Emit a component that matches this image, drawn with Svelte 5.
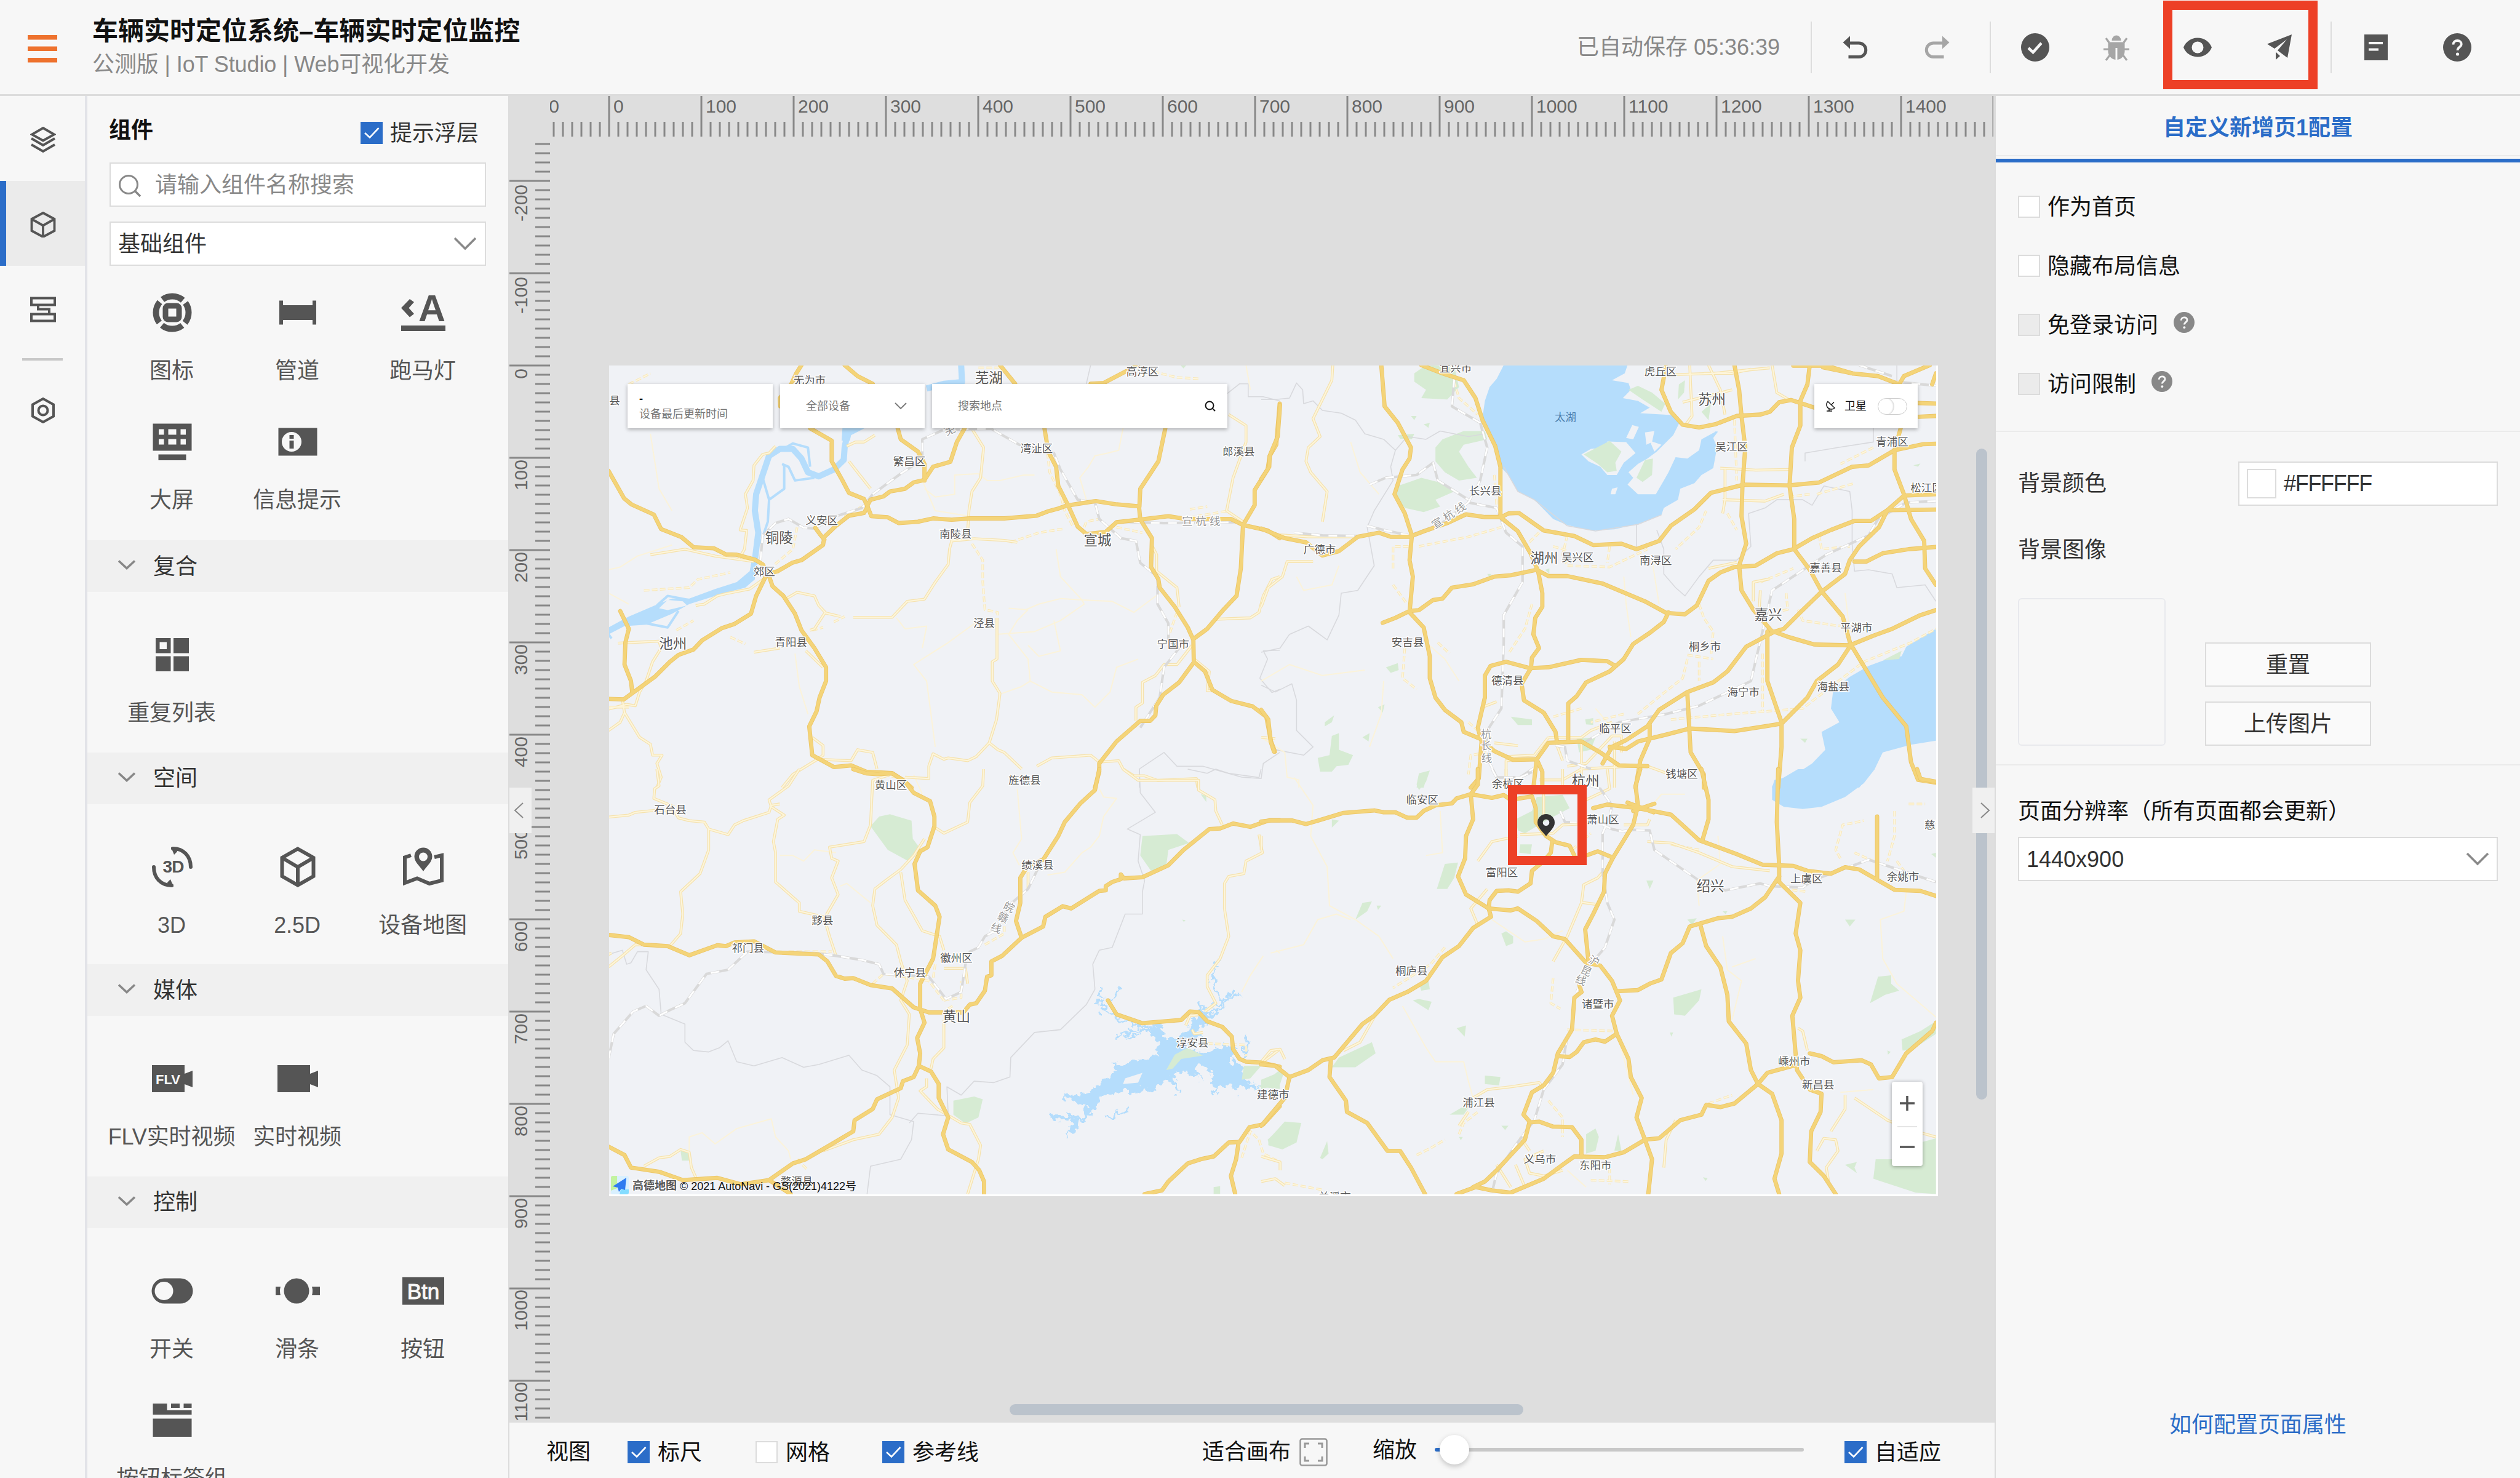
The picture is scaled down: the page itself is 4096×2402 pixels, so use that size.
<script>
  const groups = [
    { title: '', items: [['icon', '图标'], ['pipe', '管道'], ['marquee', '跑马灯'], ['screen', '大屏'], ['info', '信息提示']] },
    { title: '复合', items: [['repeat', '重复列表']] },
    { title: '空间', items: [['threeD', '3D'], ['cube', '2.5D'], ['geo', '设备地图']] },
    { title: '媒体', items: [['flv', 'FLV实时视频'], ['video', '实时视频']] },
    { title: '控制', items: [['toggle', '开关'], ['slider', '滑条'], ['btn', '按钮'], ['tabs', '按钮标签组']] }
  ];

  // Ruler ticks: one unit step is 10 canvas points, drawn 15px apart.
  const hTicks = Array.from({ length: 157 }, (_, i) => i - 6).map((k) => ({ pos: 96 + k * 15, major: k % 10 === 0, value: k * 10 }));
  const vTicks = Array.from({ length: 139 }, (_, i) => i - 24).map((k) => ({ pos: 372 + k * 15, major: k % 10 === 0, value: k * 10 }));
  const labelGap = (v) => (v < 0 ? 6 : 6 - String(v).length);

  // The map is split in four tiles, each with its own local coordinates.
  const tiles = [
    {
      t: 'translate(980 580) scale(.70153 .44643)', ox: 980, oy: 580, sx: 0.70153, sy: 0.44643,
      water: ['345,740 355,740 352,810 330,840 280,860 200,900 160,935 100,975 50,980 13,1010 13,985 60,945 120,905 160,880 200,880 260,845 310,820 340,780', '555,258 608,258 575,285 572,305 553,305'],
      land: ['130,915 150,885 185,890 195,905 150,922'],
      river: ['830,30 832,92 790,98 750,115', '565,290 560,330 558,375 535,410 500,435 475,420 460,370 440,335 410,335 385,360 370,430 355,500 352,560 360,640 352,740 347,790'],
      stream: ['415,390 430,400 445,450 490,440', '420,395 420,480 385,520 382,600 365,680', '370,440 385,520', '125,905 150,870 200,885', '100,970 150,985 175,925', '390,360 440,315 475,330 480,400', '13,1010 20,1025'],
      green: ['1338,30 1352,30 1345,42'],
      major: ['460,30 448,60 436,100 410,150 411,180', '13,415 49,515 66,537 118,574 135,627 182,656 210,693 257,697 285,719 310,720 352,738 370,755 383,790', '480,260 530,305 530,380 555,450 570,495 605,517 613,545 622,580 660,584 685,605 730,600 765,588 808,593 850,588 930,588 1005,578 1030,563 1055,552 1075,541 1142,525 1190,537 1242,544 1245,592 1272,660 1270,765 1287,810 1290,840 1325,910 1355,985 1368,1030 1369,1110 1395,1145 1412,1212 1455,1252 1505,1272 1537,1310 1548,1400 1557,1437', '613,540 620,520 650,508 665,490 700,480 720,457 745,448 765,400 805,382 820,310 838,260', '683,260 690,300 730,345 745,390 745,450', '560,30 590,70 625,98', '920,30 955,98', '1130,98 1160,95 1215,50 1240,30', '1023,260 1032,345 1050,400 1055,470 1078,541 1100,618 1120,645 1165,637 1190,602 1245,592 1310,580 1350,590 1455,590 1483,612 1540,632 1568,660', '1303,260 1287,380 1245,480 1243,545', '1568,170 1560,320 1545,360 1540,410 1510,485 1510,540 1483,612 1478,770 1468,870 1435,925 1400,990 1370,1025', '613,545 605,568 570,578 540,615 513,655 510,685 460,740 438,750 405,780 383,790 393,835 418,870 445,935 460,995 490,1060 517,1130 517,1180 502,1240 495,1290 478,1345 485,1450 535,1493 575,1487 610,1510 670,1515 695,1540 715,1568', '492,622 505,650 513,665', '380,790 355,870 343,935 305,972 275,988 230,1032 210,1065 175,1085 155,1110 120,1165 70,1222 48,1247 13,1245', '40,925 60,990 52,1040 50,1120 65,1180 68,1222', '1369,1112 1335,1185 1298,1230 1282,1270 1280,1305 1268,1325 1245,1325 1190,1400 1150,1480 1150,1510 1140,1568'],
      minor: ['400,325 385,350 370,355 350,395 348,450 330,500 335,550 318,630 333,632 328,700 315,735', '385,795 340,845 285,862 265,870 235,900 215,905', '425,880 450,857 490,870 500,905 515,930 490,990 480,995', '515,932 550,945', '580,948 670,948 705,890 745,882 770,820 800,755 803,700 808,670 860,662 930,668 960,675', '913,950 913,1100 902,1110 902,1180 920,1225 912,1320 895,1405 915,1430 930,1440 970,1500', '895,1405 865,1455 845,1470 800,1460 790,1465 765,1445 755,1490 755,1535 700,1530', '415,1568 440,1520 497,1465 510,1450 510,1415 485,1385', '497,1465 575,1470 590,1430 625,1440 635,1500', '1005,1490 1040,1460 1130,1450 1150,1475 1195,1470 1205,1500 1230,1525 1255,1525 1285,1542 1375,1535 1378,1568', '1365,1050 1330,1120 1300,1120 1280,1160 1250,1185 1250,1260 1235,1275 1235,1325', '1370,1100 1405,1145 1400,1215 1420,1215', '13,1360 40,1330 50,1295 85,1385 110,1410 115,1450 137,1450 125,1480 135,1530 125,1568', '13,1282 55,1265 75,1270 85,1220 100,1180 115,1110 135,1060 130,1035 35,1042', '50,1295 45,1247', '1270,680 1283,720 1283,780 1330,840 1335,910', '1568,800 1550,810 1530,870 1520,930 1500,950 1420,955', '1450,210 1490,250 1490,310 1460,440 1445,560 1483,600', '855,262 882,330 875,440 855,490 848,560 845,640', '565,325 585,310 605,310 630,285', '570,380 620,480', '110,720 190,700 260,725 350,745', '470,1070 510,1130', '350,1075 410,1060', '13,1275 60,1275'],
      dash: ['95,850 200,840 220,810 295,785', '945,675 1010,640 1070,625', '855,680 880,740 880,820 885,920 915,930 913,960', '450,620 440,700 395,760', '1030,350 1035,420 1060,500 1070,560 1090,620', '60,100 110,60', '1115,620 1120,600 1150,590', '295,1020 330,1045', '170,995 210,960', '1330,930 1310,1020', '485,995 510,985', '535,965 560,945', '1360,555 1400,545', '870,40 925,40', '560,580 600,545', '1340,590 1450,560', '1240,40 1330,75 1385,80', '1190,620 1250,640'],
      faint: ['1205,260 1195,340 1170,350 1140,360 1125,400 1105,440 1120,520', '13,775 40,765 80,725 110,710 160,685', '745,480 770,510 815,500 815,430 870,425 890,450 920,450 975,430 1000,430', '940,915 980,920 1010,900 1060,880 1110,885 1115,900 1060,960 1000,1000 910,1010', '985,920 960,960 940,1010 985,1100 990,1180 1040,1220 1110,1230 1140,1275 1175,1220 1190,1130 1240,1100', '770,1420 760,1300 750,1180 720,1120 760,1080 800,1040 870,960', '1050,700 1060,800 1110,885 1180,890 1230,930 1290,860', '445,1080 455,1200 475,1300', '110,280 130,480 160,560', '1045,960 1060,1070 1010,1090 985,1050', '925,1225 970,1200 990,1180', '13,860 60,900', '680,950 700,990 750,980 740,1060', '1490,30 1500,120', '740,450 770,560 850,580'],
      rail: ['625,500 690,425 740,375 740,300 790,265 900,262 965,320 1045,350 1060,410 1100,520 1140,530 1150,590 1200,660 1235,670 1245,750 1285,800 1285,900 1310,970 1310,1040 1335,1060 1300,1130 1290,1240 1245,1350', '1190,600 1300,605 1470,602', '365,740 370,650 400,605 430,590 465,622 490,625 540,580 600,550 625,500'],
      bound: ['1120,98 1130,30', '1445,135 1475,98 1495,98 1495,145 1530,145 1568,160', '1568,1068 1530,1070 1540,1100 1522,1170 1550,1222 1568,1210', '1243,1568 1243,1500 1300,1440 1330,1490 1390,1490 1480,1530 1525,1535 1530,1480 1568,1440'],
      labels: [['无为市', 479, 84], ['芜湖', 894, 75, 1], ['高淳区', 1250, 53], ['县', 27, 159], ['湾沚区', 1005, 333], ['郎溪县', 1473, 343], ['繁昌区', 710, 380], ['义安区', 507, 595], ['铜陵', 408, 657, 1], ['南陵县', 817, 645], ['宣城', 1146, 667, 1], ['宣 杭 线', 1386, 597, 2], ['芜', 803, 266, 2, -25], ['郊区', 374, 780], ['池州', 162, 1042, 1], ['青阳县', 436, 1039], ['泾县', 883, 968], ['宁国市', 1321, 1045], ['旌德县', 977, 1539]]
    },
    {
      t: 'translate(2050 580) scale(.76531 .44643)', ox: 2050, oy: 580, sx: 0.76531, sy: 0.44643,
      water: ['515,30 778,30 772,60 745,85 780,95 785,120 768,150 800,160 825,185 805,205 855,210 880,213 888,240 920,262 970,272 960,295 968,330 960,405 935,430 920,460 890,480 885,520 855,550 850,575 800,608 750,628 700,632 650,612 620,590 600,555 580,520 545,490 525,430 508,400 495,320 480,260 470,220 475,160 485,110 500,80', '1433,990 1370,1055 1360,1090 1330,1100 1290,1125 1250,1165 1215,1210 1210,1280 1228,1330 1190,1365 1198,1430 1170,1480 1130,1525 1090,1540 1085,1568 1270,1568 1303,1500 1320,1440 1380,1412 1433,1397'],
      land: ['888,240 965,272 935,300 930,340 905,370 880,365 865,420 855,450 838,500 800,500 778,465 790,440 780,420 800,390 820,370 840,345 875,285', '680,355 700,335 735,330 735,308 775,310 795,350 770,385 755,430 735,430 720,400 695,380', '788,248 802,255 790,300 775,295', '815,275 835,270 830,310 818,320', '745,480 757,475 752,500 742,500', '825,305 850,320 835,345'],
      green: ['325,60 350,30 410,35 420,110 395,155 340,150 350,120 325,90', '370,330 385,300 430,270 475,270 480,300 430,320 420,345 440,400 458,440 420,450 390,420 370,380', '290,470 340,440 385,460 410,490 370,520 380,545 345,565 305,550 285,510', '685,355 740,306 765,345 752,385 755,415 735,420 715,390', '797,440 815,375 832,370 830,430 810,455', '780,120 800,105 830,130 858,170 850,200 810,155', '887,100 900,85 898,130 885,155', '935,200 955,170 950,230', '265,1130 290,1115 292,1140 275,1150', '135,1330 155,1305 150,1330 135,1345', '120,1460 145,1450 150,1380 165,1370 165,1430 195,1450 185,1485 160,1490 150,1510 125,1510', '335,1520 355,1510 345,1568 330,1568', '530,1310 575,1320 575,1340 545,1340', '215,1385 230,1370 228,1400', '670,1390 710,1385 700,1430 675,1440', '1320,1105 1360,1070 1355,1100', '290,285 325,280 320,300 295,298', '318,215 330,215 325,230', '1145,1390 1160,1390 1155,1405', '480,790 488,790 486,805', '603,775 612,770 612,790', '688,1320 705,1315 705,1340 690,1338', '1385,395 1400,388 1395,400', '345,245 358,240 355,258', '248,1275 262,1265 258,1295'],
      major: ['255,30 262,180 290,240 318,330 315,370 300,410 283,500 305,570 320,650 315,740 322,800 315,930 345,985 358,1090 358,1170 370,1240 390,1285 425,1330 430,1365 465,1390 495,1435 535,1467 585,1465', '40,175 35,290 18,360 17,400 0,445', '0,625 50,660 95,675 130,723 165,707 205,655 250,640 275,655 315,655 345,635 395,605 435,573 475,583 510,583', '340,30 385,60 430,85 455,150 470,230 497,325 508,400 508,583 545,635 572,715 588,780', '510,583 525,570 547,568 600,632 665,652 705,685 765,680 797,700 845,670 870,615 920,555 955,495 1025,465 1120,468 1185,457 1255,400 1290,395 1345,340 1405,318 1433,316', '258,968 285,950 315,925 335,922 365,885 385,880 405,840 450,828 495,800 530,795 585,775 610,798 650,798 725,825 815,890 860,932 900,937 925,905 950,815 975,785 1005,765 1050,760 1095,715 1130,700 1170,660 1210,630 1260,597 1295,597 1330,558 1433,556', '588,780 597,860 597,910 582,950 578,1010 590,1060 575,1095 573,1130', '865,930 855,965 825,1005 790,1045 770,1100 740,1145 690,1185 670,1235 652,1262 652,1395', '475,1240 475,1160 487,1125 520,1110 570,1133 610,1130 680,1103 735,1108 752,1125', '475,1240 460,1350 468,1400 462,1535 445,1568', '573,1133 553,1190 558,1250 600,1295 625,1365 628,1400', '1005,30 1015,120 1020,215 1028,330 1022,470 1020,580 1030,680 1015,760 1020,850 1045,920 1085,1000', '860,30 850,120 870,200 895,247 930,257 965,245 1010,215 1060,210 1080,200 1100,165 1125,157 1175,185', '1165,30 1160,100 1145,160 1145,250 1127,330 1122,470 1132,590 1132,700 1165,775 1190,853 1235,945 1252,1050', '1193,38 1255,60 1310,70 1355,100 1365,70 1420,30', '1130,32 1200,32 1255,60', '1358,260 1345,340 1345,410 1365,500 1380,590 1408,670 1410,770 1433,830', '1433,500 1365,505 1330,558 1312,620 1270,690 1250,740 1240,790 1190,855 1145,930 1110,990 1090,1000 1030,1055 990,1145 960,1185 905,1220 845,1285 820,1345 775,1395 745,1420 725,1480', '1260,745 1285,745 1320,715 1375,700 1433,692', '1088,1000 1120,1020 1175,1047 1250,1050 1300,1015 1340,990 1400,940 1433,922', '1075,1000 1075,1180 1105,1330 1105,1420 1098,1568', '1250,1055 1225,1120 1180,1180 1160,1240 1105,1335 1070,1345 1005,1362 910,1353 860,1375 800,1400 775,1427 740,1420', '1255,1055 1320,1240 1370,1345 1380,1475 1395,1540 1433,1550', '905,1225 912,1440 940,1520 940,1568', '825,1340 825,1390 805,1470 795,1568', '585,1465 610,1405 680,1400 720,1440 760,1487 820,1490', '0,1285 15,1320 20,1400 27,1437', '585,1465 578,1568', '585,1465 597,1510 597,1568', '1395,168 1433,170', '1395,218 1433,215', '1433,60 1425,100'],
      minor: ['152,30 150,85 110,225 125,290 100,330 95,380 105,420 140,490 130,600', '0,910 15,840 45,800 55,745 110,745', '40,648 100,655 195,655', '910,30 915,215 900,250', '895,165 1000,120', '950,30 975,120 985,210', '870,65 960,60 1080,40', '1085,30 1095,130 1120,155', '975,405 1050,412 1120,410', '985,410 985,520 980,570', '980,520 1070,525 1110,500', '585,1465 520,1470 520,1568', '610,1385 680,1385 700,1360 745,1330', '520,1455 580,1450 610,1385', '650,1490 690,1480 745,1380 765,1380 765,1440', '590,1540 640,1540 680,1500 790,1490', '680,1400 680,1568', '750,1400 750,1568', '495,1405 545,1415', '820,1490 860,1515', '1045,890 1045,820 1080,808', '950,770 1010,748', '470,1275 500,1255', '0,1385 30,1390', '940,60 1000,60 1040,45', '1060,850 1058,910', '625,1400 640,1470'],
      dash: ['335,690 440,655 510,620', '495,430 500,540', '1005,230 1010,450', '945,560 930,620 880,700', '990,570 1010,630', '575,900 560,990 525,1080', '590,640 560,690', '650,650 640,720 650,760 740,765 820,700', '740,690 735,750', '280,770 280,690 320,690', '280,830 310,900', '1140,920 1150,960 1230,980', '1185,650 1190,700 1250,690', '930,900 940,950 960,1000 955,1090', '905,1085 960,1100', '905,1100 895,1170 850,1230 800,1300', '930,1110 930,1180', '1065,1080 1065,1290', '870,1320 1000,1300 1150,1280 1180,1240 1280,1110 1380,1040 1433,990', '305,1060 300,1170 330,1210', '620,1310 680,1280', '1300,330 1230,390', '1120,510 1165,500', '770,1300 700,1330', '1060,820 1130,770', '440,1330 460,1360', '375,1040 400,1080', '1115,860 1118,920 1100,925', '620,690 650,705', '480,1440 445,1450 440,1520', '410,90 420,150 460,210', '1180,500 1260,460'],
      faint: ['0,1385 50,1440 55,1530 80,1540 80,1568', '260,1180 255,1300 230,1420', '75,800 90,850 150,830 165,760', '350,1040 390,1100 420,1180', '770,800 775,900 785,1020', '190,310 210,420 250,500', '1240,860 1250,1000', '0,1180 60,1120 130,1160 220,1140', '710,1280 740,1340', '1200,870 1240,980', '830,740 845,900'],
      rail: ['70,640 130,650 215,652', '225,615 260,630 315,650 380,610 440,530 500,550 520,640 555,690 555,820 515,940 515,1040 510,1280 480,1360 480,1460 500,1530 550,1530 585,1490', '410,80 405,180 465,240 480,330 465,450 440,530', '230,465 265,440 330,430 365,385 375,450 440,520', '1345,90 1433,105', '1433,525 1370,530 1310,590 1290,650 1200,720 1085,850 1070,960 1040,1180 930,1270 860,1300 760,1330 690,1400', '625,1415 645,1420 650,1470 700,1500', '1270,30 1340,70'],
      bound: ['0,155 30,155 60,150 75,95 88,120 90,170 110,160 130,195 170,205 200,230 220,280 260,300 285,340 275,400 280,450 240,560 225,620 240,760 205,850 170,860 165,940 140,1030 100,980 60,1010 40,1060 0,1075', '285,340 310,290 350,300 380,270 440,290 475,280', '0,1195 30,1220 65,1190 75,1250 75,1360 110,1420 90,1450 30,1430', '515,400 545,490 580,520 650,615 710,634 800,610 850,575', '797,700 797,610', '840,630 855,700 855,790 880,840 900,870 930,800 960,740 1010,740 1040,690 1035,570 1070,550 1095,520 1150,520 1170,540 1195,470 1250,490 1255,560 1255,680 1260,780 1290,775 1340,790 1350,840 1410,830 1433,890', '1155,380 1155,350 1225,330 1300,310 1300,260', '1350,30 1350,98'],
      labels: [['宜兴市', 413, 40], ['虎丘区', 848, 53], ['苏州', 957, 153, 1], ['太湖', 646, 219, 3], ['吴江区', 999, 327], ['青浦区', 1340, 309], ['松江区', 1413, 477], ['长兴县', 476, 488], ['宣 杭 线', 398, 577, 2, -33], ['广德市', 124, 699], ['湖州', 601, 731, 1], ['吴兴区', 672, 729], ['南浔区', 838, 740], ['嘉善县', 1199, 767], ['嘉兴', 1077, 938, 1], ['平湖市', 1264, 985], ['桐乡市', 942, 1053], ['安吉县', 311, 1038], ['德清县', 523, 1177], ['海盐县', 1215, 1200], ['海宁市', 1024, 1220], ['临平区', 752, 1351], ['杭', 478, 1372, 2], ['长', 478, 1415, 2], ['线', 479, 1460, 2], ['钱塘区', 893, 1518], ['杭州', 689, 1543, 1], ['余杭区', 524, 1553]]
    },
    {
      t: 'translate(980 1250) scale(.70153 .4528)', ox: 980, oy: 1250, sx: 0.70153, sy: 0.4528, rugged: true,
      water: ['1270,915 1295,915 1300,960 1325,970 1340,950 1360,930 1358,890 1372,900 1385,870 1400,875 1400,910 1375,940 1380,960 1350,1000 1390,1020 1415,1005 1430,990 1470,1000 1450,1040 1480,1060 1485,1110 1520,1140 1510,1150 1480,1135 1470,1145 1450,1130 1435,1145 1415,1145 1405,1080 1380,1055 1375,1090 1395,1120 1370,1100 1330,1085 1320,1105 1335,1140 1300,1115 1280,1150 1250,1140 1240,1160 1200,1155 1180,1170 1150,1180 1145,1225 1130,1240 1110,1265 1100,1260 1095,1300 1080,1300 1085,1255 1060,1260 1030,1250 1035,1235 1060,1245 1080,1240 1110,1250 1120,1200 1065,1185 1068,1160 1090,1175 1120,1165 1140,1145 1150,1130 1170,1110 1190,1075 1180,1055 1210,1060 1240,1040 1260,1045 1290,1030 1285,1000 1290,980 1265,950 1280,935'],
      land: ['1210,1110 1250,1090 1240,1125 1205,1130'],
      river: [],
      stream: ['1140,830 1165,850 1150,860 1180,880 1195,900 1220,905 1240,925 1270,925 1285,950', '1195,785 1185,825 1170,830', '1150,790 1165,830', '1420,690 1412,740 1415,780 1430,830 1400,890', '1480,805 1450,825 1430,860 1395,900', '1460,800 1430,840', '1160,1255 1190,1245 1220,1215', '1190,960 1230,940 1280,935', '1205,970 1240,955', '1490,960 1490,1000 1480,1040', '1430,1140 1410,1175', '1470,1120 1470,1160', '1385,840 1390,880', '1330,1130 1330,1165', '1075,1320 1085,1290'],
      green: ['620,205 640,170 665,162 715,185 718,250 735,285 705,328 660,290', '1250,240 1330,233 1358,265 1310,290 1305,350 1270,365 1245,310', '812,1190 860,1175 880,1185 870,1250 840,1272 812,1240', '180,1370 200,1370 200,1405 183,1405', '1305,1080 1325,1025 1355,1000 1390,1028 1340,1040 1320,1075', '1485,1065 1525,1065 1500,1110 1480,1115', '1520,1140 1568,1080 1568,1148', '1540,1330 1568,1290 1568,1355 1545,1350', '1385,90 1398,95 1398,118', '1415,1500 1430,1497 1430,1525 1415,1525', '1342,540 1350,542 1346,548'],
      major: ['580,0 610,15 635,18 670,15 700,45 720,85 758,115 768,170 768,205 752,280 735,295 722,340 730,435 770,490 780,530 765,680 735,770 735,860 745,910 728,965 735,1020 732,1065 760,1085 778,1130 778,1180 800,1250 788,1310 800,1365 855,1410 872,1440 883,1480 883,1525', '732,1065 720,1105 695,1120 690,1145 635,1185 625,1220 583,1260 580,1300 520,1355 470,1400 440,1415 385,1475 435,1525', '13,595 60,603 95,630 150,635 200,668 265,632 285,635 305,622 350,618 400,658 500,665 520,690 540,742 560,752 580,750 620,775 670,787 720,855 755,873 835,873 850,845 865,840 885,795 890,745 900,740 900,690 925,670 970,605 1020,565 1025,530 1065,492 1085,500 1150,437 1165,435 1165,420 1180,405 1200,395 1200,378 1207,392 1250,388 1310,345 1345,290 1405,215 1430,213 1460,195 1500,207 1545,183 1568,183', '970,605 957,545 967,480 967,390 985,345 1020,325 1055,240 1070,190 1105,125 1140,75 1150,0', '13,1355 50,1385 65,1430 130,1445 185,1475 265,1467 320,1490 385,1475', '1170,830 1190,880 1250,912 1340,900 1360,870 1380,872 1400,905 1435,925 1457,960 1460,1005 1475,1040 1490,1050 1525,1053 1568,1068', '1568,1210 1530,1275 1498,1285 1475,1338 1450,1340 1415,1390 1385,1400 1355,1415 1310,1480 1295,1512 1255,1525', '1473,1338 1467,1400 1455,1460 1465,1525'],
      minor: ['13,172 60,165 75,155 120,148 165,150 175,175 200,185 235,190 245,215 290,235 305,200 325,185 385,155 390,130 410,125', '125,0 130,60 120,70 118,105 165,135', '455,0 430,60 385,110 390,135 420,165 405,180 395,260 400,300 400,405 455,480 455,510 512,530 525,600 540,670', '245,215 245,290 225,375 180,440 185,520 180,590 155,635', '665,20 625,40 620,200 605,260 525,280 530,320 545,330 530,390 545,450 515,530', '745,250 720,310 690,360 655,400 630,430 625,490 635,560 680,630 690,690 705,760 690,830 710,880 705,990 675,1080 685,1180 670,1250 640,1310 580,1330 510,1370', '690,370 700,470 740,580 780,600 790,650', '882,0 880,60 850,120 845,190 790,230 770,210', '790,900 790,1000 765,1040 760,1075', '750,1110 750,1140 735,1155 775,1220 830,1270 850,1275 875,1350 870,1400 845,1525', '1205,0 1240,40 1330,40 1380,40 1380,75 1418,110 1420,150 1435,200', '1520,235 1528,300 1490,330 1485,375 1450,385 1440,410 1440,500 1450,600 1430,680 1400,740 1400,780 1420,840 1395,870', '790,715 840,715 845,770', '985,430 985,370', '95,1425 130,1395 155,1390 180,1365 200,1375 205,1430 215,1465', '13,710 45,670 75,630 150,635', '1568,1005 1530,1050', '1350,920 1360,885 1390,880', '1365,935 1370,950 1390,945', '13,665 20,660'],
      dash: ['790,830 830,820 830,760', '625,770 650,735 700,745 755,760 790,830', '885,630 930,590 930,550', '1400,985 1490,990 1490,1030', '1480,1395 1500,1300 1520,1330 1530,1380 1568,1410', '650,20 700,35', '770,700 765,750', '430,655 530,655', '450,1400 475,1440', '800,860 810,850'],
      faint: ['960,70 970,250 950,300 965,345', '410,310 440,310 465,330 490,290 540,300', '1150,70 1160,100 1190,105 1160,170 1150,240 1130,280 1110,300 1070,370 1030,380', '550,420 565,410 620,480', '200,1370 200,1320 230,1305 260,1345 310,1290 390,1255 400,1320 430,1370 435,1400', '1530,670 1500,740 1480,800', '720,20 740,90', '1560,650 1568,660'],
      rail: ['13,1040 25,950 70,870 100,850 130,885 155,865 190,840 240,735 290,720 335,655 490,660 540,670 600,685 640,700 650,735 755,745 795,825 830,800 840,700 850,655 870,640 885,600 910,580 940,490 985,430 1010,350'],
      bound: ['13,665 45,650 55,700 65,695 80,655 105,655 100,720 130,790 135,880 190,915 190,980 210,1010 245,1015 270,1000 290,975 310,1050 350,1065 415,1035 465,1070 500,1060 570,1027 600,1080 635,1100 665,1140 665,1240 720,1265 715,1330 690,1400 620,1425 612,1525', '710,1270 730,1235 805,1245', '800,1240 797,1140 830,1170 860,1120 905,1125 943,1105 945,1035 1000,945 1060,935 1120,845 1140,790 1135,700 1150,650 1180,640 1210,520 1250,520 1250,440 1255,400 1240,330 1245,235 1215,215 1280,155 1245,85 1243,0', '1355,0 1400,15 1420,0 1450,15 1520,30 1525,0'],
      labels: [['黄山区', 667, 57], ['石台县', 156, 144], ['绩溪县', 1007, 343], ['黟县', 509, 542], ['祁门县', 336, 641], ['徽州区', 819, 677], ['休宁县', 711, 730], ['黄山', 819, 888, 1], ['淳安县', 1366, 982], ['婺源县', 449, 1478], ['皖', 941, 495, 2, 25], ['赣', 927, 532, 2, 25], ['线', 911, 570, 2, 20]]
    },
    {
      t: 'translate(2050 1250) scale(.76531 .4528)', ox: 2050, oy: 1250, sx: 0.76531, sy: 0.4528,
      water: ['1140,0 1110,30 1085,60 1085,110 1110,135 1150,143 1190,135 1240,100 1280,50 1303,0'],
      land: [], river: [], stream: [],
      green: ['330,55 335,15 358,5 350,45 335,75', '373,430 390,340 418,335 410,390 395,430', '200,540 215,480 235,475 225,510', '245,490 255,490 248,505', '510,590 520,582 535,600 535,625 520,635', '335,770 355,755 358,790 340,795', '322,830 335,825 362,835 355,865', '415,930 435,920 432,960', '875,820 935,790 930,830 900,885 877,880', '1310,745 1338,740 1338,770 1355,795 1325,810 1293,840', '1360,970 1400,940 1433,905 1433,950 1380,1010 1362,1010', '165,1035 235,980 243,1020 200,1070 150,1070', '0,1115 50,1080 40,1130 0,1148', '15,1330 50,1265 85,1270 75,1340 45,1365 15,1350', '125,1395 140,1335 143,1380 130,1400', '475,1100 508,1105 505,1135 475,1130', '400,1240 430,1210 440,1215 430,1240', '690,1310 710,1290 717,1320 710,1370 690,1380', '750,1370 758,1310 765,1370', '1305,1400 1390,1400 1400,1340 1433,1325 1433,1525 1390,1520 1300,1470', '1240,1420 1265,1410 1260,1430 1265,1450', '585,100 640,92 655,140 610,180 560,230 545,220 540,180 575,150', '550,270 575,270 572,305 548,300', '150,180 165,185 150,210', '818,400 833,400 825,430', '905,540 925,535 915,560', '1240,540 1262,540 1250,565', '510,1280 525,1280 518,1295', '868,945 875,945 871,960', '938,1465 948,1468 944,1478', '980,510 990,510 986,520', '420,1320 428,1320 424,1332', '1330,1010 1337,1015 1331,1025', '1423,305 1433,300 1433,318'],
      major: ['0,188 20,184 65,184 95,197 120,185 175,157 240,148 260,155 285,155 310,174 330,174 345,150 370,130 405,123 415,105 445,90 490,103 515,93 530,110 575,98 583,140 583,190 605,240 625,262 655,275 665,310', '460,0 460,55 445,90 450,180 435,240 433,320 418,385 435,450 483,500 488,530 450,570 420,635 385,675 350,760 310,800 272,828 240,885 215,915 155,1035 130,1045 100,1080 60,1105 30,1065 0,1060', '483,500 485,470 500,437 525,435 545,440 572,410 575,365 600,330 615,300 618,260', '483,500 530,507 545,500 585,545 620,600 645,610 690,695 720,705 745,760 762,830 745,885 755,950 780,1040 785,1105 808,1180 797,1250 815,1330 830,1400 822,1525', '690,310 715,295 747,318 770,255 790,200 800,130 795,60 805,0', '747,318 730,375 728,440 705,520 688,575 695,690', '705,140 735,127 800,140 870,163 930,255 1010,305 1065,343 1130,347 1160,365 1210,375 1240,352 1270,360 1345,433 1400,437 1433,455', '778,120 833,155', '835,124 790,150', '935,0 950,110 950,180 937,255', '1098,0 1095,190 1100,345 1100,405 1145,480 1135,590 1145,650 1140,760 1145,820 1128,885 1138,1080 1165,1150 1190,1165 1188,1230 1168,1300 1165,1410 1195,1460 1220,1525', '1100,385 1070,460 1040,500 1000,530 970,535 930,555 910,565 895,625 870,660 850,755 825,770 800,793 755,797', '932,555 945,635 975,710 990,810 993,905 1030,985 1040,1080 1055,1130 1085,1165 1105,1260 1105,1380 1090,1470 1100,1525', '1308,170 1308,390', '1393,0 1400,35 1433,45', '1433,910 1425,940 1370,1020 1340,1105 1312,1110 1295,1060 1275,1045 1215,1052 1190,1030 1165,1020', '1140,1060 1075,1090 1055,1130 1005,1200 975,1213 945,1205 935,1240 890,1260 845,1325 815,1330 770,1375 730,1393 665,1390 640,1420 600,1470 530,1520 490,1512 455,1500 415,1525', '680,800 665,820 660,935 630,1020 620,1090 600,1135 575,1160 557,1240 570,1265 560,1330 500,1440 475,1480 450,1500', '680,800 675,770', '755,950 730,978 710,970 685,980 670,1015 655,1033 630,1030', '570,1268 590,1265 620,1283 660,1285 680,1330 680,1390', '148,1040 145,1105 180,1190 182,1230 225,1270 268,1370 295,1370 318,1430 348,1525', '60,1105 50,1180 0,1280'],
      minor: ['520,0 520,50', '595,0 600,100 600,180', '640,0 640,60', '550,235 620,230 640,200 700,195', '820,260 870,265 930,300 1000,350 1080,365', '770,200 820,200 825,180', '735,0 740,70 690,110', '545,240 490,260 460,330', '480,430 445,500 460,560', '730,360 715,390 685,415 680,480 650,600 620,690', '680,478 710,485', '450,1180 480,1150 530,1140 590,1125 600,1140', '550,1320 570,1370', '600,1370 560,1400 570,1450 600,1460 640,1440', '1180,1370 1195,1325 1220,1330 1225,1370 1200,1430 1205,1480', '855,1430 860,1330 880,1260', '1140,930 1150,940 1160,1010', '1240,1170 1240,1220 1210,1300', '1260,1180 1330,1260 1390,1300 1433,1320', '0,1390 40,1410 40,1440', '0,1050 20,1010 40,1005 50,1040', '0,1480 30,1470 50,1495', '175,1010 210,980 240,890', '0,290 0,240', '540,1420 560,1500', '500,1420 530,1500', '440,1230 420,1280'],
      dash: ['390,640 360,700 280,785', '330,1385 360,1360 390,1330', '420,1310 430,1270 460,1230', '650,935 750,940', '1375,125 1410,125', '1345,150 1345,240 1330,330', '1230,320 1220,290 1235,200 1280,185', '610,1190 640,1250 640,1320', '700,1475 780,1480', '950,1200 1000,1170', '620,750 615,840 635,860', '660,290 700,230', '1110,430 1160,440', '1260,300 1300,330', '50,1485 130,1510', '740,1430 740,1490', '870,270 930,290', '1350,330 1380,400'],
      faint: ['70,30 110,130 105,240 140,350 145,490 200,540 250,600 280,680', '300,850 350,1000 370,1050 430,1050 440,1120 450,1180', '380,150 385,300 350,310', '190,540 160,520 120,540 90,630 20,660', '490,540 560,620 600,610 640,580', '1370,440 1365,510 1315,540 1320,680 1350,770 1433,890', '970,240 975,340 925,400 930,490', '980,600 990,720 1020,760 1000,900', '835,120 850,90 900,90', '760,970 790,1170', '1230,1160 1300,1150', '1050,680 1000,710', '650,1440 690,1500'],
      rail: ['550,30 575,10', '635,150 645,190 670,190', '700,60 720,70 745,130 740,170 725,230 725,370 735,480 750,540 730,640 690,720 670,800', '650,960 640,1060 600,1150 580,1260 540,1350 500,1450 490,1520', '760,225 790,218 825,220 835,290 930,400 985,435 1060,410 1080,420 1150,425 1170,400 1290,325 1433,405', '490,0 500,30 540,30', '725,200 745,215 770,225'],
      bound: [],
      labels: [['临安区', 342, 110], ['萧山区', 726, 180], ['富阳区', 511, 369], ['绍兴', 954, 418, 1], ['上虞区', 1158, 392], ['余姚市', 1363, 386], ['慈溪市', 1443, 200], ['桐庐县', 319, 724], ['诸暨市', 715, 843], ['嵊州市', 1132, 1048], ['新昌县', 1183, 1131], ['浦江县', 462, 1197], ['义乌市', 592, 1399], ['东阳市', 710, 1422], ['兰溪市', 156, 1534], ['建德市', 25, 1168], ['沪', 707, 688, 2, 25], ['昆', 690, 724, 2, 25], ['线', 679, 757, 2, 20]]
    }
  ];

  const lineLayers = ['river', 'bound', 'faint', 'dash', 'minor', 'rail', 'major'];
  const casing = { minor: 'minor-core', rail: 'rail-core', major: 'major-core', dash: 'dash-core' };
  const labelClass = ['town', 'city', 'line-name', 'lake-name'];
</script>

{#snippet check(state)}
  <span class="check {state}">
    {#if state === 'on'}
      <svg viewBox="0 0 36 36"><path d="M7 18l8 7.500L29.500 10" fill="none" stroke="#fff" stroke-width="2.600" /></svg>
    {/if}
  </span>
{/snippet}

{#snippet glyph(name)}
  <svg class="glyph" viewBox="0 0 72 72">
    {#if name === 'icon'}
      <circle cx="36" cy="36" r="26.500" fill="none" stroke="#555" stroke-width="10" stroke-dasharray="35.600 6.030" stroke-dashoffset="17.800" />
      <rect x="25" y="25" width="22" height="22" rx="4" fill="none" stroke="#555" stroke-width="9" />
    {:else if name === 'pipe'}
      <path d="M6 16.500h6v7.500h48v-7.500h6v39h-6V48H12v7.500H6z" />
    {:else if name === 'marquee'}
      <path d="M0 28.500 14 14l7 5-8.500 9.500L21 38l-7 5.500z" /><rect y="57" width="72" height="9" />
      <text x="50" y="49.500" font-size="61" font-weight="700" text-anchor="middle">A</text>
    {:else if name === 'screen'}
      <path fill-rule="evenodd" d="M4.500 6.500h63v44h-63zM14 15.500v9h8.500v-9zM29.500 15.500v9h13v-9zM49.500 15.500v9H58v-9zM14 31.500v9h8.500v-9zM29.500 31.500v9h13v-9zM49.500 31.500v9H58v-9z" /><rect x="13.500" y="56.500" width="45" height="9.500" />
    {:else if name === 'info'}
      <rect x="4.500" y="13.500" width="63" height="45" /><circle cx="26" cy="36" r="16" fill="#f7f7f7" />
      <path d="M22.500 25h7v6h-7zM22.500 34h7v13h-7z" />
    {:else if name === 'repeat'}
      <path fill-rule="evenodd" d="M9 9h24.500v24.500H9zM15.500 15.500v11.500H27V15.500z" /><path d="M38 9h25v24.500H38zM9 38.500h24.500V63H9zM38 38.500h25V63H38z" />
    {:else if name === 'threeD'}
      <path d="M37 6c17 0 29 12 29 30M35 66C18 66 6 54 6 36" fill="none" stroke="#555" stroke-width="6" stroke-linecap="round" />
      <path d="M34 4h9l1 7-5 5zM38 68h-9l-1-7 5-5z" />
      <text x="37.500" y="45" font-size="28" font-weight="700" text-anchor="middle" letter-spacing="-1">3D</text>
    {:else if name === 'cube'}
      <path d="M36 6.500 61.500 21v30L36 65.500 10.500 51V21zM10.500 21 36 36l25.500-15M36 36v29" fill="none" stroke="#555" stroke-width="6" />
    {:else if name === 'geo'}
      <path d="M16 17 6 20.500V62l20-7.500L46 63l20-5V17l-12 3" fill="none" stroke="#555" stroke-width="6" />
      <path fill-rule="evenodd" d="M36 4.500a14.500 14.500 0 0 1 14.500 14.500C50.500 28 42 34 36 43c-6-9-14.500-15-14.500-24A14.500 14.500 0 0 1 36 4.500zm0 8a7 7 0 1 0 0 14 7 7 0 0 0 0-14z" />
    {:else if name === 'flv' || name === 'video'}
      <path d="M3 14h53v14l13-5v27l-13-5v13H3z" />
      {#if name === 'flv'}<text x="29" y="45" font-size="22" font-weight="700" text-anchor="middle" class="inv">FLV</text>{/if}
    {:else if name === 'toggle'}
      <rect x="2.500" y="15.500" width="67" height="41" rx="20.500" /><circle cx="22.500" cy="36" r="15" fill="#f7f7f7" />
    {:else if name === 'slider'}
      <circle cx="34" cy="36" r="20.500" /><path d="M0 29h8q-2 7 0 14H0zM59 29h13v14H59q2-7 0-14z" />
    {:else if name === 'btn'}
      <rect x="2" y="13.500" width="68" height="45" /><text x="36" y="48.500" font-size="35" text-anchor="middle" class="inv thick">Btn</text>
    {:else if name === 'tabs'}
      <path d="M4.500 9h23v11h40v7h-63zM34 9h14v7H34zM54.500 9h13v7h-13zM4.500 33.500h63V63h-63z" />
    {/if}
  </svg>
{/snippet}

{#snippet help(size, color)}
  <svg width={size} height={size} viewBox="0 0 46 46">
    <circle cx="23" cy="23" r="23" fill={color} />
    <path d="M16.500 18.500c0-4 2.800-6.500 6.700-6.500s6.500 2.300 6.500 5.800c0 4.700-6.200 4.700-6.200 10" fill="none" stroke="#f7f7f7" stroke-width="3.800" /><circle cx="23.500" cy="34" r="2.600" fill="#f7f7f7" />
  </svg>
{/snippet}

<div class="app">
  <header>
    <svg class="burger" viewBox="0 0 48 46"><path d="M0 0h48v7.500H0zM0 18.500h48V26H0zM0 37h48v7.500H0z" fill="#ee722e" /></svg>
    <div class="titles">
      <h1>车辆实时定位系统–车辆实时定位监控</h1>
      <p>公测版 | IoT Studio | Web可视化开发</p>
    </div>
    <span class="saved">已自动保存 05:36:39</span>
    <i class="sep s1"></i>
    <div class="tools t1">
      <svg viewBox="0 0 48 48"><path d="M12.500 17h17a11 11 0 0 1 0 22.500h-17" fill="none" stroke="#555" stroke-width="5" /><path d="M3.500 16 15 5.500v21z" fill="#555" /></svg>
      <svg viewBox="0 0 48 48"><path d="M35.500 17h-17a11 11 0 0 0 0 22.500h17" fill="none" stroke="#a6a6a6" stroke-width="5" /><path d="M44.500 16 33 5.500v21z" fill="#a6a6a6" /></svg>
    </div>
    <i class="sep s2"></i>
    <div class="tools t2">
      <svg viewBox="0 0 48 48"><circle cx="24" cy="24" r="23" fill="#555" /><path d="M13 25l7.500 7L34 17" fill="none" stroke="#f7f7f7" stroke-width="4.500" /></svg>
      <svg viewBox="0 0 48 48"><path d="M16.500 13a7.500 8.500 0 0 1 15 0zM10.500 15.500h27V31a13.500 14 0 0 1-12 13V25h-3v19a13.500 14 0 0 1-12-13z" fill="#a6a6a6" /><path d="M7 9l5 7M41 9l-5 7M3 27h8M45 27h-8M7 45l6-8M41 45l-6-8" stroke="#a6a6a6" stroke-width="3.200" /></svg>
      <svg viewBox="0 0 48 48"><path fill-rule="evenodd" d="M1 24C5 14 14 8.500 24 8.500S43 14 47 24C43 34 34 39.500 24 39.500S5 34 1 24zm23-9.500a9.500 9.500 0 1 0 0 19 9.500 9.500 0 0 0 0-19z" fill="#555" /></svg>
      <svg viewBox="0 0 48 48"><path d="M45 3 5 18.500l12 7.500L37 11 22 29l16 12zM19 31.500v12.500l7-6z" fill="#555" /></svg>
    </div>
    <i class="sep s3"></i>
    <div class="tools t3">
      <svg viewBox="0 0 48 48"><path fill-rule="evenodd" d="M5 3h38v42H5zM12 15v4h23v-4zM12 25.500v4h16v-4z" fill="#555" /></svg>
      <span class="help-wrap">{@render help(46, '#555')}</span>
    </div>
    <div class="mark mark-top"></div>
  </header>

  <div class="body">
    <nav>
      <div class="rail-item"><svg viewBox="0 0 42 42"><path d="M21 2 39 12.500 21 22.500 3 12.500zM2 19l19 11 19-11M2 29l19 11 19-11" fill="none" stroke="#555" stroke-width="3.800" /></svg></div>
      <div class="rail-item active"><svg viewBox="0 0 42 42"><path d="M21 2 39.500 12v19L21 41 2.500 31V12zM2.500 12 21 22.500 39.500 12M21 22.500V41" fill="none" stroke="#555" stroke-width="3.800" /></svg></div>
      <div class="rail-item"><svg viewBox="0 0 42 42"><path d="M2 2.500h38v11H2zM2 28.500h38v11H2zM13 14v6.500h18v8" fill="none" stroke="#555" stroke-width="4" /></svg></div>
      <i></i>
      <div class="rail-item last"><svg viewBox="0 0 42 42"><path d="M21 2 38 11.500v19L21 40 4 30.500v-19z" fill="none" stroke="#555" stroke-width="4" /><circle cx="21" cy="21" r="7.500" fill="none" stroke="#555" stroke-width="4" /></svg></div>
    </nav>

    <aside class="components">
      <div class="panel-head"><b>组件</b><span class="opt">{@render check('on')}<em>提示浮层</em></span></div>
      <div class="field search">
        <svg viewBox="0 0 38 38"><circle cx="17" cy="17" r="14.500" fill="none" stroke="#888" stroke-width="3" /><path d="M27 27l9 9" stroke="#888" stroke-width="3.500" /></svg>
        <span>请输入组件名称搜索</span>
      </div>
      <div class="field select"><span>基础组件</span><svg class="caret" viewBox="0 0 36 22"><path d="M1 2l17 17L35 2" /></svg></div>
      {#each groups as g}
        {#if g.title}
          <div class="group-head"><svg viewBox="0 0 28 16"><path d="M1 1.500l13 12 13-12" /></svg>{g.title}</div>
        {/if}
        <div class="grid" class:first={!g.title}>
          {#each g.items as [name, label]}
            <div class="cell">{@render glyph(name)}<span>{label}</span></div>
          {/each}
        </div>
      {/each}
    </aside>

    <main>
      <div class="workspace">
        <svg class="ruler-top" width="2346" height="66">
          <text x="-45" y="27">-100</text>
          {#each hTicks as t}
            <line x1={t.pos} x2={t.pos} y1={t.major ? 0 : 42} y2="66" />
            {#if t.major && t.pos < 2300}<text x={t.pos + 7} y="27">{t.value}</text>{/if}
          {/each}
        </svg>
        <svg class="ruler-left" width="66" height="2090">
          {#each vTicks as t}
            <line y1={t.pos} y2={t.pos} x1={t.major ? 0 : 42} x2="66" />
            {#if t.major}<text transform="translate(28.500 {t.pos + labelGap(t.value)}) rotate(-90)" text-anchor="end">{t.value}</text>{/if}
          {/each}
        </svg>
        <div class="stage">
          <div class="page">
            <svg class="map" viewBox="990 594 2157 1347">
              <filter id="shore" x="-10%" y="-10%" width="120%" height="120%">
                <feTurbulence type="fractalNoise" baseFrequency=".09" numOctaves="3" seed="4" />
                <feDisplacementMap in="SourceGraphic" scale="22" xChannelSelector="R" yChannelSelector="G" />
              </filter>
              {#each tiles as tile}
                <g filter={tile.rugged ? 'url(#shore)' : null}>
                  <g transform={tile.t}>
                    {#each tile.water as p}<polygon class="water" points={p} />{/each}
                    {#each tile.stream as p}<polyline class="stream" points={p} />{/each}
                  </g>
                </g>
                <g transform={tile.t}>
                  {#each tile.land as p}<polygon class="land" points={p} />{/each}
                  {#each tile.green as p}<polygon class="green" points={p} />{/each}
                </g>
              {/each}
              {#each lineLayers as layer}
                {#each tiles as tile}
                  <g transform={tile.t}>
                    {#each tile[layer] as p}<polyline class={layer} points={p} />{/each}
                    {#if casing[layer]}
                      {#each tile[layer] as p}<polyline class={casing[layer]} points={p} />{/each}
                    {/if}
                  </g>
                {/each}
              {/each}
              {#each tiles as tile}
                {#each tile.labels as [name, x, y, kind = 0, rot = 0]}
                  <text class={labelClass[kind]} transform="translate({tile.ox + x * tile.sx} {tile.oy + y * tile.sy}) rotate({rot})" dy=".370em">{name}</text>
                {/each}
              {/each}
              <g transform="translate(993 1911)">
                <rect width="29" height="30" rx="3" fill="#d9f0ff" /><path d="M0 3q0-3 3-3h7v20L0 24z" fill="#c3f3a0" /><path d="M16 22h13v5q0 3-3 3H14z" fill="#84dcff" />
                <path d="M25 3 3 17l8 2 2 7 4-5 6 2z" fill="#2f7bf0" />
              </g>
              <text class="brand" x="1028" y="1933">高德地图</text>
              <text class="credit" x="1105" y="1934" textLength="287">© 2021 AutoNavi - GS(2021)4122号</text>
              <path fill-rule="evenodd" d="M2513 1323a14 14 0 0 1 14 14c0 8-8 14-14 22-6-8-14-14-14-22a14 14 0 0 1 14-14zm0 8.500a5.300 5.300 0 1 0 0 10.600 5.300 5.300 0 0 0 0-10.600z" fill="#333" />
            </svg>
            <div class="cards">
              <div class="card updated"><b>-</b><span>设备最后更新时间</span></div>
              <div class="card devices"><span>全部设备</span><svg viewBox="0 0 20 12"><path d="M1 1l9 9 9-9" fill="none" stroke="#777" stroke-width="1.800" /></svg></div>
              <div class="card place"><span>搜索地点</span><svg viewBox="0 0 18 18"><circle cx="8" cy="8" r="6.500" fill="none" stroke="#111" stroke-width="2" /><path d="M12.500 12.500l4.500 4.500" stroke="#111" stroke-width="2" /></svg></div>
              <div class="card sat">
                <svg viewBox="0 0 18 18"><path d="M4 1.500C0 6 2 12 7 13.500c3 1 6 .5 8-1.500zM9.500 7 14 2.500M6 13.500V17M2 17h9" fill="none" stroke="#111" stroke-width="1.400" /></svg>
                <span>卫星</span><i class="switch"></i>
              </div>
            </div>
            <div class="zoom"><svg viewBox="0 0 50 137"><path d="M25 23v24M13 35h24M13 106h24" stroke="#555" stroke-width="3.600" /><path d="M9 73h32" stroke="#ddd" stroke-width="1.500" /></svg></div>
            <div class="mark mark-pin"></div>
          </div>
        </div>
        <div class="scroll-v"></div>
        <div class="scroll-h"></div>
        <div class="handle left"><svg viewBox="0 0 36 74"><path d="M22 25 9 37l13 12" /></svg></div>
        <div class="handle right"><svg viewBox="0 0 36 74"><path d="M14 25l13 12-13 12" /></svg></div>
      </div>
      <footer>
        <span class="f-view">视图</span>
        <span class="opt f-ruler">{@render check('on')}<em>标尺</em></span>
        <span class="opt f-grid">{@render check('off')}<em>网格</em></span>
        <span class="opt f-guide">{@render check('on')}<em>参考线</em></span>
        <span class="f-fit">适合画布</span>
        <svg class="fit" viewBox="0 0 46 46"><rect x="1.500" y="1.500" width="43" height="43" rx="3" fill="none" stroke="#999" stroke-width="2.600" /><path d="M9 16V9h7M30 9h7v7M37 30v7h-7M16 37H9v-7" fill="none" stroke="#999" stroke-width="3" /></svg>
        <span class="f-scale">缩放</span>
        <div class="track"><b></b></div>
        <span class="opt f-auto">{@render check('on')}<em>自适应</em></span>
      </footer>
    </main>

    <aside class="config">
      <div class="tab">自定义新增页1配置</div>
      <div class="tab-line"></div>
      <div class="options">
        <div class="opt">{@render check('off')}<em>作为首页</em></div>
        <div class="opt">{@render check('off')}<em>隐藏布局信息</em></div>
        <div class="opt">{@render check('dis')}<em>免登录访问</em>{@render help(34, '#888')}</div>
        <div class="opt">{@render check('dis')}<em>访问限制</em>{@render help(34, '#888')}</div>
      </div>
      <div class="background">
        <div class="row"><span>背景颜色</span><div class="field color"><i></i>#FFFFFF</div></div>
        <div class="row image-title">背景图像</div>
        <div class="upload"><div class="preview"></div><div class="buttons"><button>重置</button><button>上传图片</button></div></div>
      </div>
      <div class="resolution">
        <div>页面分辨率（所有页面都会更新）</div>
        <div class="field select"><span>1440x900</span><svg class="caret" viewBox="0 0 36 22"><path d="M1 2l17 17L35 2" /></svg></div>
      </div>
      <a href="#help">如何配置页面属性</a>
    </aside>
  </div>
</div>

<style>
  :global(body) { margin: 0; }
  .app, .app * { box-sizing: border-box; }
  .app { width: 4096px; height: 2402px; overflow: hidden; display: flex; flex-direction: column; background: #f7f7f7; font: 36px/48px "Liberation Sans", "Noto Sans CJK SC", sans-serif; color: #333; }
  svg { display: block; flex: none; }
  h1, p { margin: 0; }
  em, i { font-style: normal; }

  header { position: relative; height: 156px; flex: none; display: flex; align-items: center; border-bottom: 3px solid #dcdcdc; padding-left: 45px; }
  .burger { width: 48px; height: 46px; margin-top: 6px; }
  .titles { margin: 0 0 2px 57px; width: 800px; }
  h1 { font-size: 42px; line-height: 58px; color: #111; white-space: nowrap; margin-top: -1px; }
  p { color: #888; white-space: nowrap; letter-spacing: -.1px; margin-top: 1px; }
  .saved { width: 380px; margin-left: 1613px; color: #888; white-space: nowrap; margin-top: 1px; }
  .sep { width: 2px; height: 84px; background: #ddd; }
  .tools { display: flex; gap: 84px; }
  .tools svg { width: 48px; height: 48px; }
  .help-wrap { width: 48px; padding: 1px; }
  .help-wrap :global(svg) { width: 46px; height: 46px; }
  .t1 { margin: 0 62px 0 47px; }
  .t2 { margin: 0 60px 0 48px; }
  .t3 { margin-left: 48px; }
  .mark { position: absolute; border: 15px solid #ed4026; }
  .mark-top { left: 3516px; top: 1px; width: 251px; height: 144px; }

  .body { flex: 1; min-height: 0; display: flex; }
  nav { width: 142px; flex: none; border-right: 4px solid #e2e3e8; }
  .rail-item { height: 138px; display: flex; align-items: center; justify-content: center; padding: 3px 0 0 2px; }
  .rail-item svg { width: 42px; height: 42px; }
  .rail-item.active { background: #ebebeb; box-shadow: inset 10px 0 #2b6dc8; }
  nav > i { display: block; width: 66px; height: 4px; margin: 12px 36px 10px; background: #c8c8c8; }

  .components { width: 686px; flex: none; border-right: 2px solid #dcdcdc; overflow: hidden; }
  .panel-head { display: flex; justify-content: space-between; margin: 32px 47px 0 35px; height: 52px; }
  .panel-head b { color: #111; }
  .panel-head .opt { height: 52px; padding-top: 4px; width: 193px; }
  .panel-head em { color: #333; }
  .opt { display: flex; align-items: center; white-space: nowrap; color: #111; }
  .opt em { padding-top: 1px; }
  .check { width: 36px; height: 36px; margin-right: 12px; flex: none; border: 2px solid #dcdcdc; background: #fff; }
  .check.on { border: 0; background: #2b6dc8; }
  .check.dis { background: #ebebeb; }
  .field { height: 72px; background: #fff; border: 2px solid #dcdcdc; display: flex; align-items: center; }
  .components .field { margin: 0 36px 24px; width: 612px; }
  .search { padding-left: 12px; margin-top: 24px !important; color: #888; }
  .search svg { width: 38px; height: 38px; margin: 4px 22px 0 0; }
  .search span { padding-top: 1px; }
  .select { justify-content: space-between; padding: 0 14px 0 12px; }
  .select span { padding-top: 2px; }
  .caret { width: 36px; height: 22px; }
  .caret path, .group-head path { fill: none; stroke: #888; stroke-width: 3.600; }
  .grid { display: grid; grid-template-columns: repeat(3, 204px); grid-auto-rows: 210px; padding: 0 0 50.600px 36px; }
  .grid.first { margin-top: -50px; padding-bottom: 52px; }
  .cell { display: flex; flex-direction: column; align-items: center; padding-top: 66px; color: #555; white-space: nowrap; }
  .cell span { margin: 35px 2px 0 0; letter-spacing: -.1px; }
  .glyph { width: 72px; height: 72px; fill: #555; }
  .glyph .inv { fill: #f7f7f7; }
  .glyph .thick { stroke: #f7f7f7; stroke-width: 1; }
  .group-head { height: 84px; background: #f0f0f0; display: flex; align-items: center; padding: 1px 0 0 50px; }
  .group-head svg { width: 28px; height: 16px; margin: 0 29px 5px 0; }

  main { width: 2416px; flex: none; border-right: 2px solid #dcdcdc; display: flex; flex-direction: column; }
  .workspace { position: relative; height: 2156px; background: #dedede; display: grid; grid-template: 66px 2090px / 66px 1fr; }
  .ruler-top { grid-column: 2; overflow: hidden; }
  .ruler-left { grid-column: 1; overflow: hidden; }
  .ruler-top line, .ruler-left line { stroke: #888; stroke-width: 3; }
  .ruler-top text, .ruler-left text { font-size: 30px; fill: #666; }
  .stage { padding: 372px 0 0 96px; }
  .page { position: relative; width: 2160px; height: 1350px; background: #fff; }
  .map { width: 2157px; height: 1347px; background: #f0f2f6; overflow: hidden; }
  .map polyline { fill: none; vector-effect: non-scaling-stroke; stroke-linejoin: round; }
  .water { fill: #b5ddfc; }
  .land { fill: #f0f2f6; }
  .green { fill: #d6ebd3; }
  .river { stroke: #b5ddfc; stroke-width: 10; }
  .stream { stroke: #b5ddfc; stroke-width: 4; }
  .bound { stroke: #d8d9dd; stroke-width: 1.600; }
  .faint { stroke: #fbf3da; stroke-width: 2; }
  .dash { stroke: #f8e8ba; stroke-width: 4; stroke-dasharray: 9 4; }
  .dash-core { stroke: #fdf6df; stroke-width: 1.800; stroke-dasharray: 9 4; }
  .minor { stroke: #f5e2ad; stroke-width: 4.600; }
  .minor-core { stroke: #fdf5da; stroke-width: 2.200; }
  .rail { stroke: #d9d9d9; stroke-width: 4.200; }
  .rail-core { stroke: #fff; stroke-width: 2.800; stroke-dasharray: 14 14; }
  .major { stroke: #ecc564; stroke-width: 6.800; stroke-linecap: round; }
  .major-core { stroke: #f4d479; stroke-width: 5.200; stroke-linecap: round; }
  .map text { text-anchor: middle; fill: #555; font-size: 17.500px; stroke: #fff; stroke-width: 3px; stroke-linejoin: round; paint-order: stroke; }
  .map .city { font-size: 22.500px; }
  .map .line-name { fill: #999; }
  .map .lake-name { fill: #4c7fae; stroke: none; }
  .map .brand { text-anchor: start; font-size: 18px; font-weight: 700; }
  .map .credit { text-anchor: start; font-size: 18px; fill: #111; stroke: none; }
  .cards { position: absolute; left: 30px; top: 30px; width: 2097px; display: flex; gap: 12px; }
  .card { height: 72px; background: #fff; box-shadow: 0 2px 6px rgba(0, 0, 0, .3); display: flex; align-items: center; font-size: 18px; line-height: 24px; color: #777; }
  .updated { width: 236px; flex-direction: column; align-items: flex-start; padding: 12px 0 0 19px; }
  .updated b { color: #111; }
  .updated span { margin-top: 1px; }
  .devices { width: 235px; justify-content: space-between; padding: 0 29px 0 42px; }
  .devices svg { width: 20px; height: 12px; }
  .place { width: 480px; justify-content: space-between; padding: 0 19px 0 42px; }
  .place svg { width: 18px; height: 18px; }
  .sat { width: 168px; margin-left: auto; padding: 0 17px 0 18px; color: #111; }
  .sat svg { width: 18px; height: 18px; margin-right: 13px; }
  .switch { margin-left: auto; width: 48px; height: 27px; border: 1.500px solid #ccc; border-radius: 14px; box-shadow: inset -22px 0 0 -2px #fff, inset -24px 0 2px -2px #ddd; }
  .zoom { position: absolute; left: 2085px; top: 1164px; width: 50px; height: 137px; border-radius: 4px; background: #fff; box-shadow: 0 1px 6px rgba(0, 0, 0, .35); }
  .mark-pin { left: 1461px; top: 682px; width: 128px; height: 130px; }
  .scroll-v { position: absolute; left: 2384px; top: 573px; width: 18px; height: 1058px; border-radius: 9px; background: #bbc3cc; }
  .scroll-h { position: absolute; left: 813px; top: 2126px; width: 835px; height: 18px; border-radius: 9px; background: #bbc3cc; }
  .handle { position: absolute; top: 1124px; width: 36px; height: 74px; background: #f0f0f0; }
  .handle.left { left: 0; }
  .handle.right { right: 0; }
  .handle path { fill: none; stroke: #888; stroke-width: 2; }

  footer { height: 90px; display: flex; align-items: center; padding: 6px 0 0 60px; color: #111; white-space: nowrap; }
  footer .check { margin-right: 13px; }
  .f-ruler { margin-left: 60px; }
  .f-grid { margin-left: 87px; }
  .f-guide { margin-left: 85px; }
  .f-fit { margin-left: 363px; }
  .fit { width: 46px; height: 46px; margin-left: 14px; }
  .f-scale { margin: -7px 0 0 73px; }
  .track { position: relative; width: 600px; height: 6px; margin: -8px 0 0 29px; border-radius: 3px; background: linear-gradient(90deg, #2b6dc8 32px, #c8c8c8 32px); }
  .track b { position: absolute; left: 8px; top: -21px; width: 48px; height: 48px; border-radius: 50%; background: #fff; box-shadow: 0 3px 9px rgba(0, 0, 0, .22); }
  .f-auto { margin-left: 66px; }

  .config { width: 852px; flex: none; display: flex; flex-direction: column; }
  .tab { height: 98px; line-height: 104px; text-align: center; font-weight: 700; color: #2b6dc8; border-bottom: 2px solid #ebebeb; }
  .tab-line { height: 6px; margin-top: 4px; background: #2b6dc8; }
  .options { padding: 48px 0 0 36px; height: 438px; border-bottom: 2px solid #ebebeb; }
  .options .opt { height: 48px; margin-bottom: 48px; }
  .options .opt > :global(svg) { margin: -8px 0 0 25px; }
  .background { padding: 48px 36px 0; height: 542px; border-bottom: 2px solid #ebebeb; }
  .row { display: flex; justify-content: space-between; align-items: center; }
  .color { width: 422px; padding-left: 12px; letter-spacing: -1.300px; }
  .color i { width: 48px; height: 48px; border: 2px solid #dcdcdc; margin-right: 12px; }
  .image-title { margin-top: 48px; }
  .upload { display: flex; align-items: flex-end; gap: 64px; margin-top: 54px; }
  .preview { width: 240px; height: 240px; border: 2px solid #e8e9ed; border-radius: 6px; }
  .buttons { display: flex; flex-direction: column; gap: 24px; }
  button { width: 270px; height: 72px; border: 2px solid #dcdcdc; background: #fafafa; font: inherit; color: #333; padding: 1px 0 0; }
  .resolution { padding: 51px 36px 0; color: #111; }
  .resolution .field { margin-top: 17px; color: #333; padding-right: 13px; }
  a { margin-top: auto; padding-bottom: 62px; text-align: center; color: #2b6dc8; text-decoration: none; }
</style>
